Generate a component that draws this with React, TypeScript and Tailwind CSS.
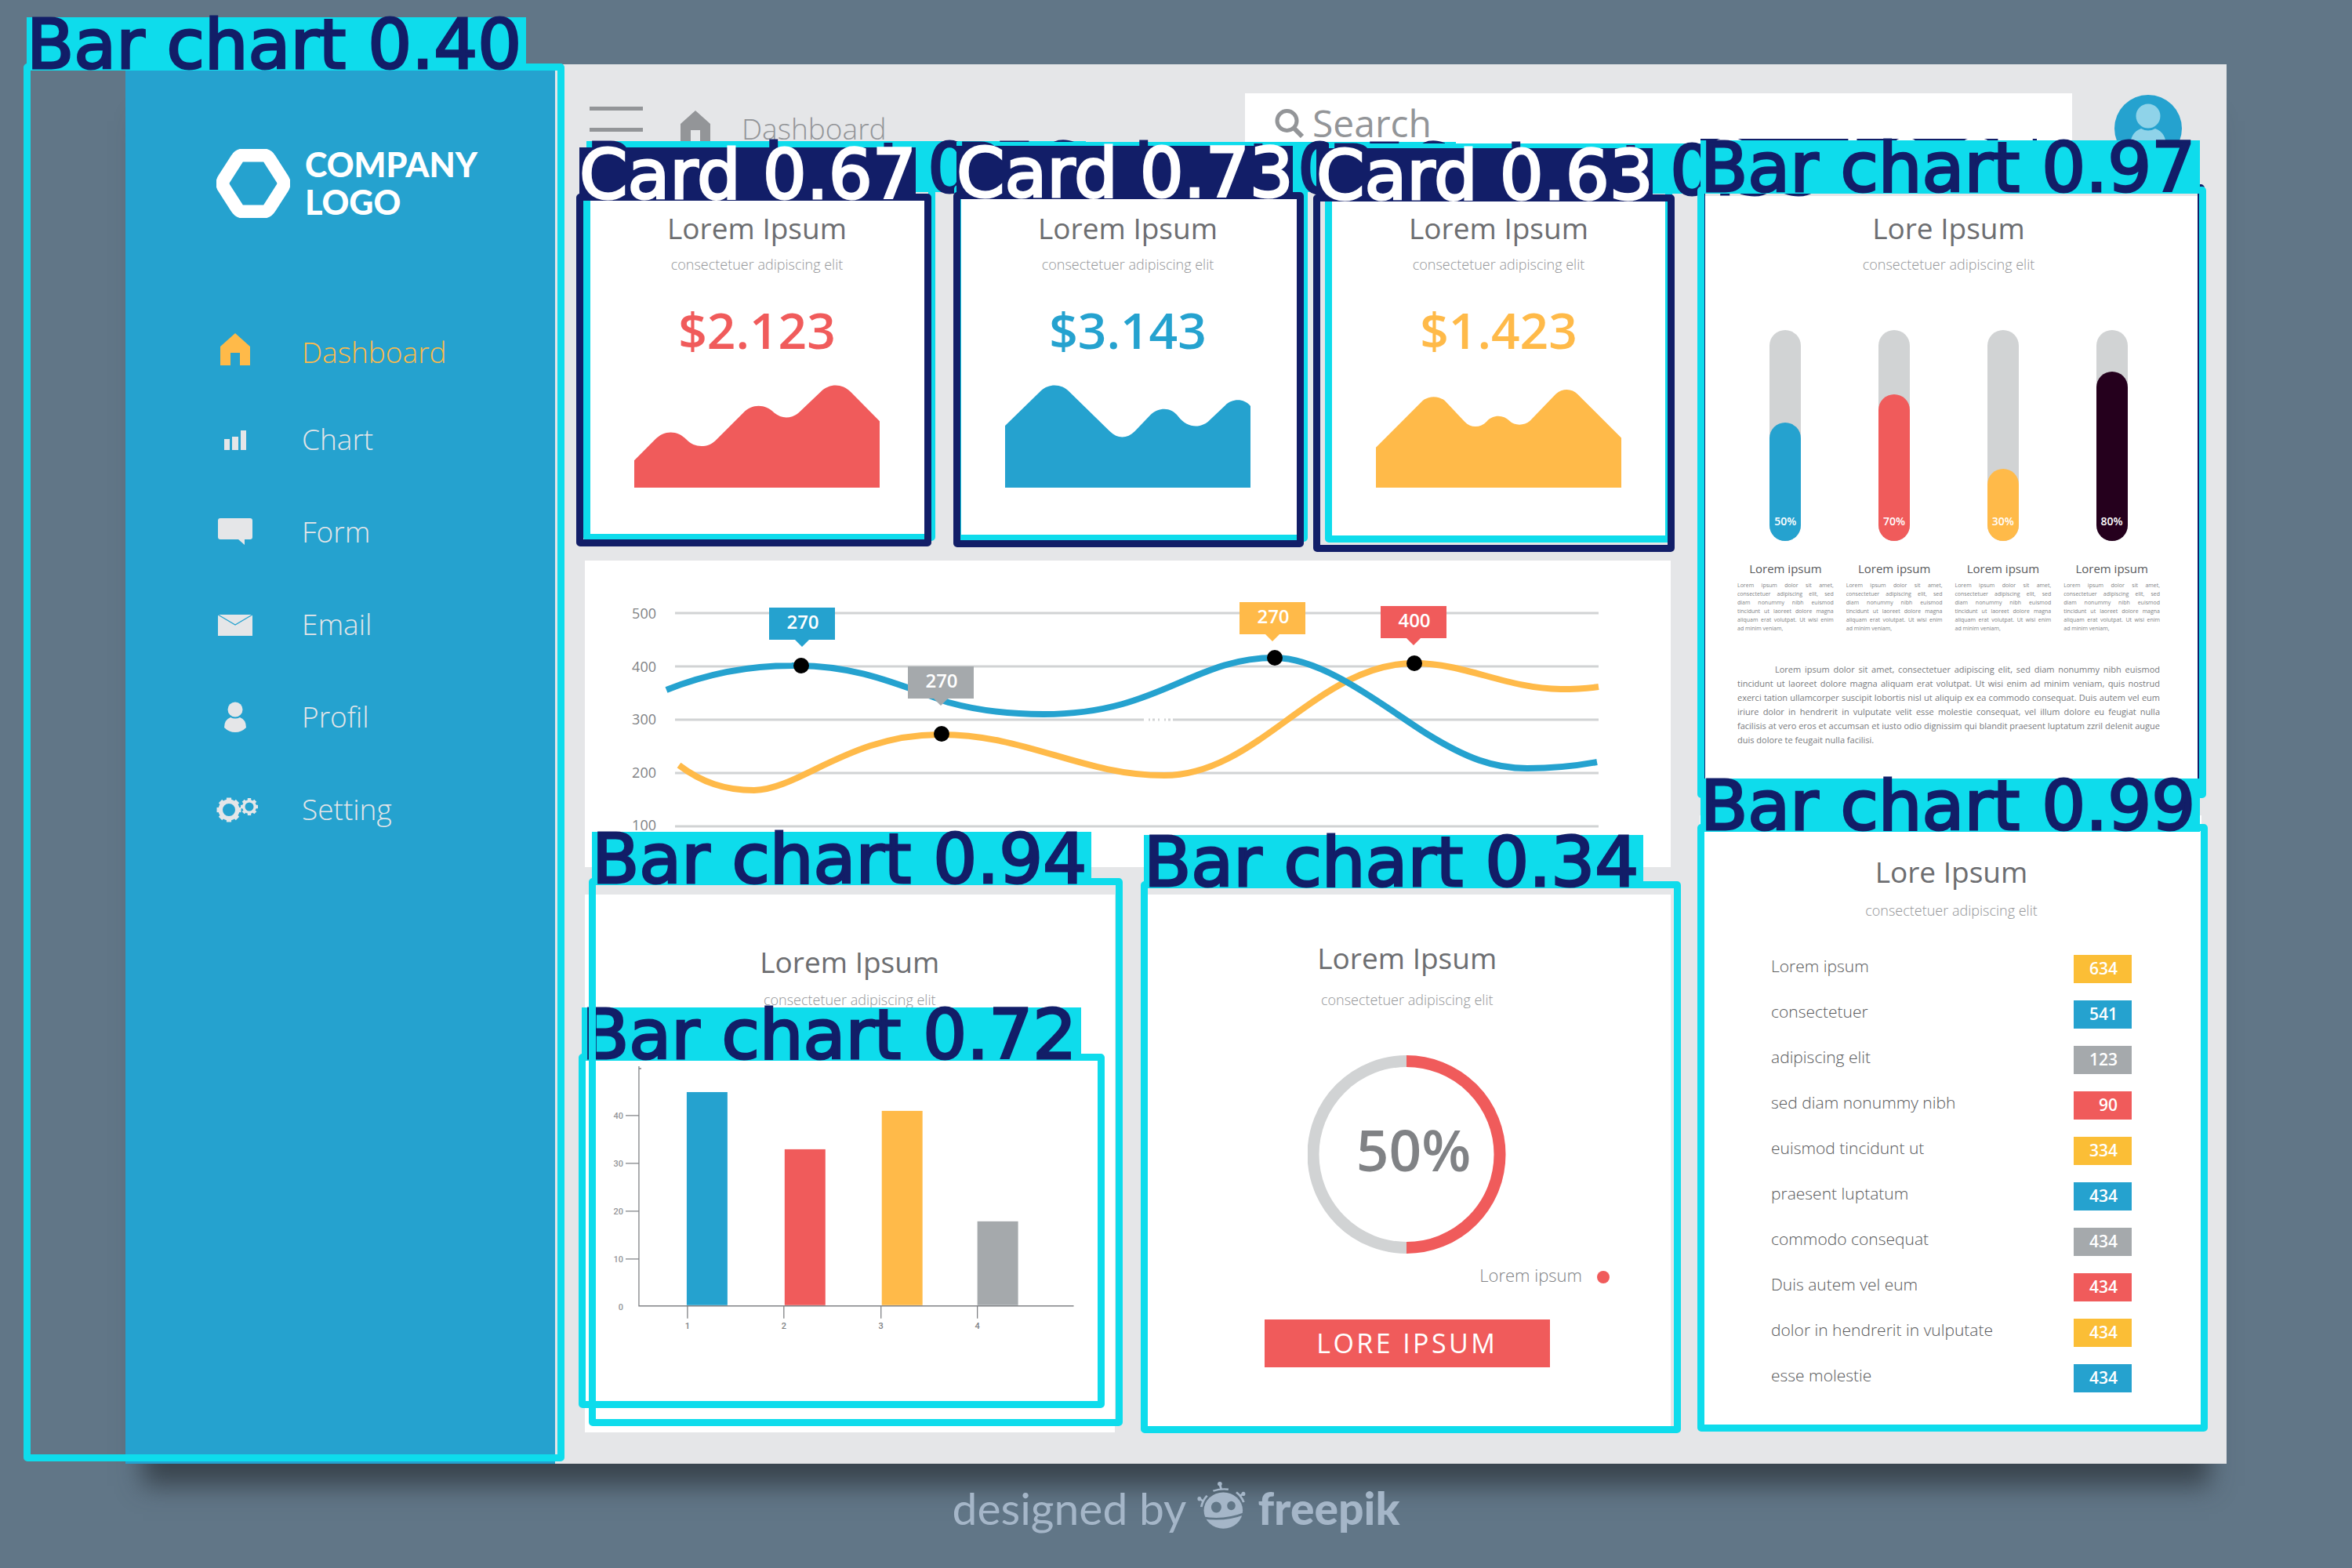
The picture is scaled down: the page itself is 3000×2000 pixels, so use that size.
import React from "react";

type Tone = "cyan" | "navy";

type Detection = {
  label: string;
  tone: Tone;
  tagX: number;
  tagY: number;
  tagBottom: number;
  x: number;
  y: number;
  right: number;
  bottom: number;
};

const detections: Detection[] = [
  { label: "Bar chart 0.40", tone: "cyan", tagX: 34, tagY: 22, tagBottom: 90, x: 30, y: 81, right: 720, bottom: 1864 },
  { label: "Bar chart 0.56", tone: "cyan", tagX: 748, tagY: 180, tagBottom: 245, x: 744, y: 236, right: 1193, bottom: 690 },
  { label: "Bar chart 0.56", tone: "cyan", tagX: 1220, tagY: 181, tagBottom: 245, x: 1217, y: 236, right: 1668, bottom: 691 },
  { label: "Bar chart 0.53", tone: "cyan", tagX: 1695, tagY: 183, tagBottom: 247, x: 1690, y: 238, right: 2133, bottom: 692 },
  { label: "Card 0.67", tone: "navy", tagX: 739, tagY: 188, tagBottom: 256, x: 735, y: 247, right: 1188, bottom: 697 },
  { label: "Card 0.73", tone: "navy", tagX: 1220, tagY: 186, tagBottom: 254, x: 1216, y: 245, right: 1663, bottom: 698 },
  { label: "Card 0.63", tone: "navy", tagX: 1679, tagY: 189, tagBottom: 257, x: 1675, y: 248, right: 2136, bottom: 704 },
  { label: "Card 0.67", tone: "navy", tagX: 2169, tagY: 177, tagBottom: 244, x: 2166, y: 235, right: 2812, bottom: 1016 },
  { label: "Bar chart 0.97", tone: "cyan", tagX: 2169, tagY: 179, tagBottom: 247, x: 2165, y: 238, right: 2814, bottom: 1018 },
  { label: "Bar chart 0.72", tone: "cyan", tagX: 742, tagY: 1285, tagBottom: 1353, x: 738, y: 1344, right: 1409, bottom: 1796 },
  { label: "Bar chart 0.94", tone: "cyan", tagX: 755, tagY: 1061, tagBottom: 1129, x: 751, y: 1120, right: 1432, bottom: 1819 },
  { label: "Bar chart 0.34", tone: "cyan", tagX: 1459, tagY: 1065, tagBottom: 1133, x: 1455, y: 1124, right: 2144, bottom: 1828 },
  { label: "Bar chart 0.99", tone: "cyan", tagX: 2169, tagY: 993, tagBottom: 1061, x: 2165, y: 1051, right: 2816, bottom: 1826 },
];

function DetectionMark({ d }: { d: Detection }) {
  const cyan = d.tone === "cyan";
  return (
    <>
      <div
        className={"absolute rounded-[5px] border-[9px] " + (cyan ? "border-[#0edcec]" : "border-[#121e68]")}
        style={{ left: d.x, top: d.y, width: d.right - d.x, height: d.bottom - d.y }}
      />
      <div
        className={
          "absolute whitespace-nowrap font-['DejaVu_Sans',sans-serif] text-[88px] leading-[70px] [-webkit-text-stroke:3px_currentColor] [stroke-linejoin:round] " +
          (cyan ? "w-[637px] bg-[#0edcec] text-[#121e68]" : "w-[429px] bg-[#121e68] text-white")
        }
        style={{ left: d.tagX, top: d.tagY, height: d.tagBottom - d.tagY }}
      >
        {d.label}
      </div>
    </>
  );
}

function Gear({ cx, cy, r, hole }: { cx: number; cy: number; r: number; hole: number }) {
  const ring = (r + hole) / 2 - 1;
  const teeth = [0, 45, 90, 135, 180, 225, 270, 315];
  return (
    <g>
      <circle cx={cx} cy={cy} r={ring} fill="none" stroke="currentColor" strokeWidth={r - hole - 2} />
      {teeth.map((a) => (
        <rect key={a} x={cx - r / 5} y={cy - r} width={(r * 2) / 5} height={r / 3} fill="currentColor" transform={`rotate(${a} ${cx} ${cy})`} />
      ))}
    </g>
  );
}

const HomePath = "M0 17 L19 0 L38 17 V41 H25 V25 H13 V41 H0 Z";

const navIcons: Record<string, React.ReactNode> = {
  Dashboard: <path transform="translate(11 3)" d={HomePath} fill="currentColor" />,
  Chart: <path d="M16 27h7v14h-7zM26 24h8v17h-8zM37 16h7v25h-7z" fill="currentColor" />,
  Form: <path d="M11 11h38a3 3 0 0 1 3 3v21a3 3 0 0 1-3 3h-7v7l-8-7H11a3 3 0 0 1-3-3V14a3 3 0 0 1 3-3z" fill="currentColor" transform="translate(0 -1)" />,
  Email: (
    <>
      <path d="M8 15h44v27H8z" fill="currentColor" />
      <path d="M8 15 L30 28 L52 15" fill="none" stroke="#25a2cf" strokeWidth="1.4" />
    </>
  ),
  Profil: (
    <>
      <ellipse cx="30" cy="18" rx="9.500" ry="9.500" fill="currentColor" />
      <path d="M24 28 Q30 31 36 28 Q44 31 44 41 Q38 47 30 47 Q22 47 16 41 Q16 31 24 28z" fill="currentColor" />
    </>
  ),
  Setting: (
    <>
      <Gear cx={22} cy={28} r={15.5} hole={8} />
      <Gear cx={48} cy={24} r={11} hole={5.5} />
    </>
  ),
};

function Sidebar() {
  const items = ["Dashboard", "Chart", "Form", "Email", "Profil", "Setting"];
  return (
    <aside className="w-[548px] shrink-0 bg-[#25a2cf] pt-[104px] pl-[116px] text-[#e5e6e8]">
      <div className="flex items-center gap-[19px] text-white">
        <svg width="94" height="88" viewBox="0 0 94 88" aria-hidden="true">
          <path d="M34 8 H60 Q65 8 68 13 L84 38 Q88 44 84 50 L68 75 Q65 80 60 80 H34 Q29 80 26 75 L10 50 Q6 44 10 38 L26 13 Q29 8 34 8 Z" fill="none" stroke="currentColor" strokeWidth="17" />
        </svg>
        <div className="font-[Lato,sans-serif] text-[43px] leading-[48px] font-black">
          COMPANY
          <br />
          LOGO
        </div>
      </div>
      <nav aria-label="Main" className="mt-[140px]">
        <ul>
          {items.map((item, i) => (
            <li key={item} className={i === 0 ? "h-[111px]" : "h-[118px]"}>
              <a href={"#" + item.toLowerCase()} className={"-ml-[6px] flex items-center gap-[55px] " + (i === 0 ? "text-[#ffba49]" : "")}>
                <svg width="60" height="54" viewBox="0 0 60 54" aria-hidden="true">
                  {navIcons[item]}
                </svg>
                <span className="text-[37px] leading-[52px] font-light">{item}</span>
              </a>
            </li>
          ))}
        </ul>
      </nav>
    </aside>
  );
}

function TopBar() {
  return (
    <header className="flex h-[71px] items-start text-[#939598]">
      <div className="flex w-[842px] shrink-0 items-start pl-[6px]">
        <button type="button" aria-label="Menu" className="mt-[17px] flex w-[68px] flex-col gap-[22px]">
          <span className="h-[5px] w-full bg-[#939598]" />
          <span className="h-[5px] w-full bg-[#939598]" />
          <span className="h-[5px] w-full bg-[#939598]" />
        </button>
        <a href="#dashboard" className="ml-12 flex items-start gap-[40px]">
          <svg className="mt-[22px]" width="38" height="41" viewBox="0 0 38 41" aria-hidden="true">
            <path d={HomePath} fill="currentColor" />
          </svg>
          <span className="mt-[19px] text-[37px] leading-[52px] font-light">Dashboard</span>
        </a>
      </div>
      <div className="flex h-full min-w-0 flex-1 items-center gap-[10px] bg-white pt-[4px] pl-[38px]">
        <svg width="38" height="38" viewBox="0 0 38 38" aria-hidden="true">
          <circle cx="15.500" cy="16" r="12.500" fill="none" stroke="currentColor" strokeWidth="5" />
          <path d="M23 24 L35 36" stroke="currentColor" strokeWidth="6" />
        </svg>
        <input type="search" aria-label="Search" placeholder="Search" className="h-[66px] min-w-0 flex-1 bg-transparent text-[48px] leading-[66px] outline-none placeholder:text-[#939598]" />
      </div>
      <button type="button" aria-label="Account" className="mt-[2px] mr-[25px] ml-[54px] size-[86px] shrink-0 overflow-hidden rounded-full bg-[#25a2cf]">
        <svg viewBox="0 0 86 86" aria-hidden="true">
          <circle cx="43" cy="27" r="15.500" fill="#8fd3e9" />
          <path d="M34 43 Q43 48 52 43 Q66 48 66 66 Q56 74 43 74 Q30 74 20 66 Q20 48 34 43z" fill="#8fd3e9" />
        </svg>
      </button>
    </header>
  );
}

function Heading({ title, gap }: { title: string; gap: string }) {
  return (
    <div className="text-center">
      <h2 className="text-[37px] leading-[52px] text-[#6d6e71]">{title}</h2>
      <p className={"text-[18px] leading-[28px] font-light text-[#939598] " + gap}>consectetuer adipiscing elit</p>
    </div>
  );
}

const stats = [
  {
    value: "$2.123",
    color: "text-[#f05b5b]",
    box: "216 1008 612 320",
    d: "M216 1243 L268 1178 C290 1148 324 1148 346 1178 C366 1205 398 1205 418 1182 L488 1095 C508 1066 544 1066 565 1095 C584 1114 606 1114 626 1095 L682 1028 C704 1003 734 1003 756 1030 L828 1121 V1328 H216Z",
  },
  {
    value: "$3.143",
    color: "text-[#25a2cf]",
    box: "0 0 312 131",
    d: "M0 52 L46 7 C56 -2 72 -2 82 9 L133 59 C143 69 155 69 165 59 L185 38 C196 28 211 28 220 40 C232 56 250 56 261 44 L280 26 C289 17 304 17 312 27 V131 H0Z",
  },
  {
    value: "$1.423",
    color: "text-[#ffba49]",
    box: "567 1008 645 320",
    d: "M567 1203 L690 1057 C706 1041 732 1041 748 1057 L800 1122 C815 1143 842 1143 858 1122 C874 1100 902 1100 918 1120 C932 1136 956 1136 972 1120 L1040 1036 C1058 1018 1082 1018 1098 1038 L1212 1173 V1328 H567Z",
  },
];

function StatCards() {
  return (
    <div className="grid grid-cols-3 gap-[34px]">
      {stats.map((s) => (
        <section key={s.value} className="flex flex-col items-center bg-white pt-[15px] pb-[68px]">
          <Heading title="Lorem Ipsum" gap="mt-[6px]" />
          <p className={"mt-[30px] text-[64px] leading-[80px] font-semibold " + s.color}>{s.value}</p>
          <svg className={"mt-[30px] h-[131px] w-[313px] " + s.color} viewBox={s.box} preserveAspectRatio="none" aria-hidden="true">
            <path d={s.d} fill="currentColor" />
          </svg>
        </section>
      ))}
    </div>
  );
}

const pins = [
  { x: 1023, y: 775, text: "270", fill: "#25a2cf" },
  { x: 1200, y: 850, text: "270", fill: "#a5a9ac" },
  { x: 1623, y: 768, text: "270", fill: "#ffba49" },
  { x: 1803, y: 773, text: "400", fill: "#f05b5b" },
];

const dots = [
  [1022, 849],
  [1201, 936],
  [1626, 839],
  [1804, 846],
];

function LineChart() {
  return (
    <section className="bg-white">
      <svg className="block h-auto w-full" viewBox="746 715 1385 391" role="img" aria-label="Line chart">
        {[500, 400, 300, 200, 100].map((v, i) => (
          <g key={v}>
            <line x1="861" x2="2039" y1={782 + i * 68} y2={782 + i * 68} stroke="#d1d3d4" strokeWidth="3" />
            <text x="837" y={789 + i * 67.5} textAnchor="end" fontSize="18" fontWeight="500" fill="#808285">
              {v}
            </text>
          </g>
        ))}
        <line x1="1459" x2="1496" y1="918" y2="918" stroke="#fff" strokeWidth="4" strokeDasharray="6 2 3 3 4 2" />
        <path d="M866 976 C895 998 925 1008 962 1008 C1020 1007 1085 936 1200 937 C1310 937 1380 989 1485 989 C1605 989 1680 846 1804 846 C1870 846 1920 878 1991 879 C2010 879 2025 878 2039 876" fill="none" stroke="#ffba49" strokeWidth="8" />
        <path d="M850 880 C905 858 960 849 1010 849 C1090 847 1150 875 1210 896 C1250 907 1290 911 1331 911 C1480 911 1520 839 1626 839 C1690 839 1770 905 1820 936 C1870 967 1905 980 1948 980 C1985 980 2010 977 2037 972" fill="none" stroke="#25a2cf" strokeWidth="8" />
        {dots.map(([x, y]) => (
          <circle key={x} cx={x} cy={y} r="10" fill="#000" />
        ))}
        {pins.map((p) => (
          <g key={p.x}>
            <path d={`M${p.x - 42} ${p.y}h84v41h-33l-9 9l-9-9h-33z`} fill={p.fill} />
            <text x={p.x + 1} y={p.y + 27} textAnchor="middle" fontSize="24" fontWeight="600" fill="#fff">
              {p.text}
            </text>
          </g>
        ))}
      </svg>
    </section>
  );
}

const bars = [
  { x: 876, top: 1394, fill: "#25a2cf", tick: 877 },
  { x: 1001, top: 1467, fill: "#f05b5b", tick: 1000 },
  { x: 1125, top: 1418, fill: "#ffba49", tick: 1124 },
  { x: 1247, top: 1559, fill: "#a5a9ac", tick: 1247 },
];

function BarChartCard() {
  return (
    <section className="bg-white pt-[60px]">
      <Heading title="Lorem Ipsum" gap="mt-[8px]" />
      <svg className="mt-[50px] block h-auto w-full font-[Roboto,sans-serif]" viewBox="746 1340 676 380" role="img" aria-label="Bar chart">
        {bars.map((b) => (
          <rect key={b.x} x={b.x} y={b.top} width="52" height={1666 - b.top} fill={b.fill} />
        ))}
        <path d="M818 1364h-3M815 1361V1667H1370M798 1424h17M798 1485h17M798 1546h17M798 1607h17" fill="none" stroke="#808285" strokeWidth="1.300" />
        {[40, 30, 20, 10, 0].map((v, i) => (
          <text key={v} x="795" y={1428 + i * 61} textAnchor="end" fontSize="11" fontWeight="500" fill="#939598">
            {v}
          </text>
        ))}
        {bars.map((b, i) => (
          <g key={b.tick}>
            <line x1={b.tick} x2={b.tick} y1="1667" y2="1683" stroke="#808285" strokeWidth="1.300" />
            <text x={b.tick} y="1696" textAnchor="middle" fontSize="11" fontWeight="500" fill="#808285">
              {i + 1}
            </text>
          </g>
        ))}
      </svg>
    </section>
  );
}

function DonutCard() {
  return (
    <section className="flex flex-col items-center bg-white pt-[55px] pb-[83px] pl-[3px]">
      <Heading title="Lorem Ipsum" gap="mt-[13px]" />
      <svg className="mt-[57px]" width="253" height="253" viewBox="0 0 253 253" role="img" aria-label="50%">
        <path d="M126 7.500 A119 119 0 0 0 126 245.500" fill="none" stroke="#d1d3d4" strokeWidth="15" />
        <path d="M126 7.500 A119 119 0 0 1 126 245.500" fill="none" stroke="#f05b5b" strokeWidth="15" />
        <text x="135" y="148" textAnchor="middle" fontSize="73" fontWeight="600" fill="#808285">
          50%
        </text>
      </svg>
      <div className="mt-3 flex items-center gap-[19px] self-end pr-[78px] text-[22px] leading-[30px] font-light text-[#808285]">
        Lorem ipsum
        <span className="mt-[6px] size-4 rounded-full bg-[#f05b5b]" />
      </div>
      <button type="button" className="mt-[42px] h-[61px] w-[364px] bg-[#f05b5b] text-[34px] leading-[61px] tracking-widest text-white">
        LORE IPSUM
      </button>
    </section>
  );
}

const gauges = [
  { label: "50%", height: "h-[151px]", fill: "bg-[#25a2cf]" },
  { label: "70%", height: "h-[187px]", fill: "bg-[#f05b5b]" },
  { label: "30%", height: "h-[92px]", fill: "bg-[#ffba49]" },
  { label: "80%", height: "h-[216px]", fill: "bg-[#25001d]" },
];

const blurb = [
  "Lorem ipsum dolor sit amet,",
  "consectetuer adipiscing elit, sed",
  "diam nonummy nibh euismod",
  "tincidunt ut laoreet dolore magna",
  "aliquam erat volutpat. Ut wisi enim",
  "ad minim veniam,",
];

const paragraph = [
  "Lorem ipsum dolor sit amet, consectetuer adipiscing elit, sed diam nonummy nibh euismod",
  "tincidunt ut laoreet dolore magna aliquam erat volutpat. Ut wisi enim ad minim veniam, quis nostrud",
  "exerci tation ullamcorper suscipit lobortis nisl ut aliquip ex ea commodo consequat. Duis autem vel eum",
  "iriure dolor in hendrerit in vulputate velit esse molestie consequat, vel illum dolore eu feugiat nulla",
  "facilisis at vero eros et accumsan et iusto odio dignissim qui blandit praesent luptatum zzril delenit augue",
  "duis dolore te feugait nulla facilisi.",
];

function Justified({ lines, indent }: { lines: string[]; indent?: boolean }) {
  return (
    <>
      {lines.map((line, i) => (
        <span
          key={line}
          className={
            "block whitespace-nowrap " +
            (i < lines.length - 1 ? "text-justify [text-align-last:justify] " : "") +
            (indent && i === 0 ? "pl-12" : "")
          }
        >
          {line}
        </span>
      ))}
    </>
  );
}

function GaugeCard() {
  return (
    <section className="bg-white pt-[15px] pr-[53px] pb-[55px] pl-[48px]">
      <Heading title="Lore Ipsum" gap="mt-[6px]" />
      <div className="mt-[70px] grid grid-cols-4 gap-4">
        {gauges.map((g) => (
          <div key={g.label}>
            <div className="mx-auto flex h-[269px] w-10 flex-col justify-end rounded-full bg-[#d1d3d4]">
              <div className={"flex items-end justify-center rounded-full pb-[15px] text-[14px] leading-[20px] font-semibold text-white " + g.height + " " + g.fill}>
                {g.label}
              </div>
            </div>
            <h3 className="mt-[25px] text-center text-[15px] leading-[20px] font-medium text-[#58595b]">Lorem ipsum</h3>
            <p className="mt-[6px] text-[7px] leading-[11px] text-[#808285]">
              <Justified lines={blurb} />
            </p>
          </div>
        ))}
      </div>
      <p className="mt-[38px] text-[11px] leading-[18px] text-[#77797c]">
        <Justified lines={paragraph} indent />
      </p>
    </section>
  );
}

const rows = [
  ["Lorem ipsum", "634", "bg-[#fbbe36]"],
  ["consectetuer", "541", "bg-[#25a2cf]"],
  ["adipiscing elit", "123", "bg-[#a5a9ac]"],
  ["sed diam nonummy nibh", "90", "bg-[#f05b5b]"],
  ["euismod tincidunt ut", "334", "bg-[#fbbe36]"],
  ["praesent luptatum", "434", "bg-[#25a2cf]"],
  ["commodo consequat", "434", "bg-[#a5a9ac]"],
  ["Duis autem vel eum", "434", "bg-[#f05b5b]"],
  ["dolor in hendrerit in vulputate", "434", "bg-[#fbbe36]"],
  ["esse molestie", "434", "bg-[#25a2cf]"],
];

function ListCard() {
  return (
    <section className="bg-white pt-[46px] pr-[89px] pb-[35px] pl-[91px]">
      <Heading title="Lore Ipsum" gap="mt-[9px]" />
      <table className="mt-[32px] w-full">
        <tbody>
          {rows.map(([name, value, fill]) => (
            <tr key={name} className="h-[58px]">
              <th scope="row" className="pb-2 text-left text-[21px] leading-[28px] font-light text-[#58595b]">
                {name}
              </th>
              <td className="w-[74px]">
                <div className={"h-9 pr-[18px] text-right text-[21px] leading-[34px] font-semibold text-white " + fill}>{value}</div>
              </td>
            </tr>
          ))}
        </tbody>
      </table>
    </section>
  );
}

function Credit() {
  return (
    <footer className="mt-[24px] flex items-center justify-center gap-[14px] font-[Lato,sans-serif] text-[57px] leading-[64px] text-[#a5b6c8]">
      <span>designed by</span>
      <svg width="63" height="62" viewBox="855 150 155 185" preserveAspectRatio="none" aria-hidden="true" className="-mt-[6px]">
        <ellipse cx="937" cy="262" rx="61" ry="69" fill="currentColor" />
        <ellipse cx="915" cy="250" rx="16" ry="21" fill="#617687" />
        <ellipse cx="962" cy="244" rx="13" ry="17" fill="#617687" />
        <path d="M870 289 Q940 304 1005 273" fill="none" stroke="#617687" strokeWidth="8" />
        <path d="M905 188 Q930 178 953 182M926 162l4 18M978 193Q994 208 1001 231M989 208l10-10M886 206Q872 224 868 249M874 228l-10-10" fill="none" stroke="currentColor" strokeWidth="7" />
        <ellipse cx="926" cy="161" rx="7" ry="8" fill="currentColor" />
        <ellipse cx="1000" cy="199" rx="6" ry="8" fill="currentColor" />
        <ellipse cx="862" cy="218" rx="6" ry="8" fill="currentColor" />
      </svg>
      <span className="font-black">freepik</span>
    </footer>
  );
}

export default function App() {
  return (
    <div className="relative min-h-screen w-full overflow-hidden bg-[#617687] px-[160px] pt-[82px] font-['Open_Sans',sans-serif]">
      <div className="flex bg-[#e5e6e8] shadow-[0_50px_30px_-22px_rgba(50,60,68,0.85)]">
        <Sidebar />
        <main className="min-w-0 flex-1 pt-[37px] pr-[32px] pb-[40px] pl-[38px]">
          <TopBar />
          <div className="mt-[60px] grid grid-cols-[1385fr_640fr] items-start gap-[37px]">
            <div className="flex min-w-0 flex-col">
              <StatCards />
              <div className="mt-[25px]">
                <LineChart />
              </div>
              <div className="mt-[35px] grid grid-cols-2 gap-[34px]">
                <BarChartCard />
                <DonutCard />
              </div>
            </div>
            <div className="flex min-w-0 flex-col gap-[32px]">
              <GaugeCard />
              <ListCard />
            </div>
          </div>
        </main>
      </div>
      <Credit />
      <div className="pointer-events-none absolute inset-0">
        {detections.map((d) => (
          <DetectionMark key={d.tagX + "-" + d.tagY} d={d} />
        ))}
      </div>
    </div>
  );
}
